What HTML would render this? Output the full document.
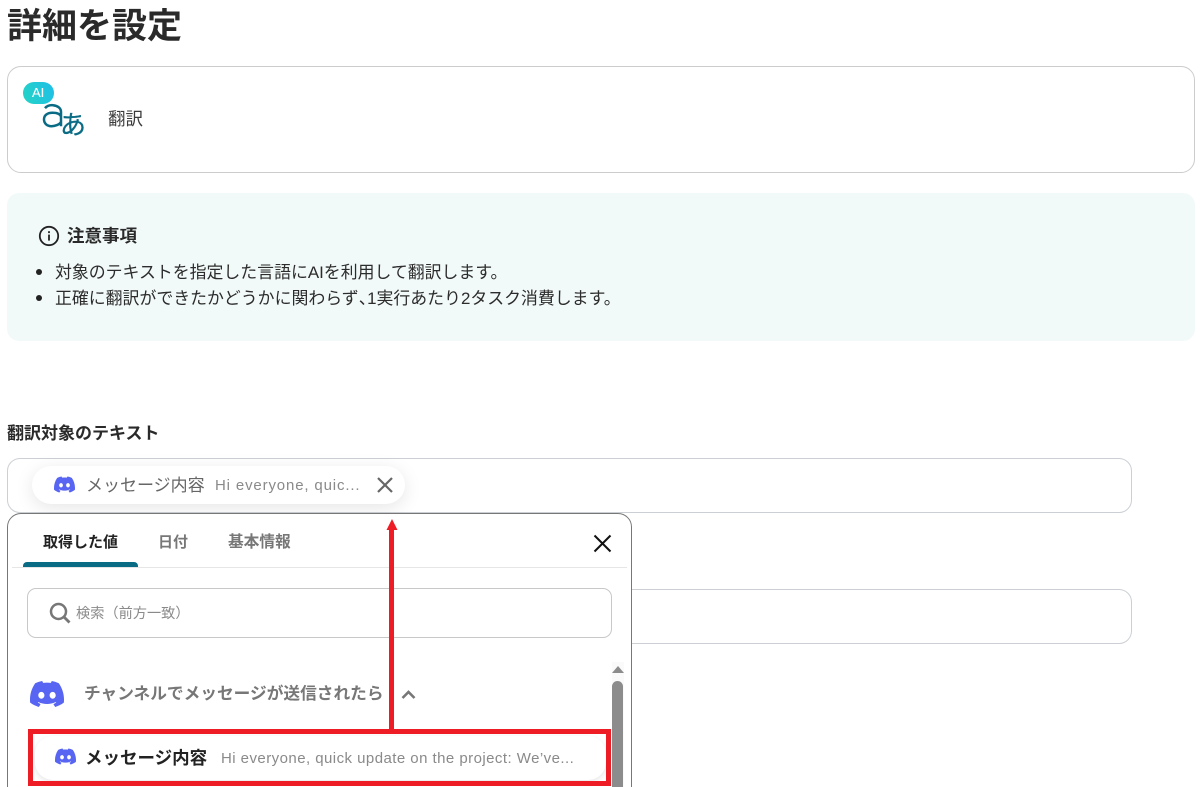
<!DOCTYPE html>
<html lang="ja"><head><meta charset="utf-8"><title>詳細を設定</title>
<style>
html,body{margin:0;padding:0;background:#fff;width:1200px;height:787px;overflow:hidden}
body{position:relative;font-family:"Liberation Sans","Noto Sans CJK JP",sans-serif;color:#222}
.a{position:absolute;box-sizing:border-box}
.t{position:absolute;white-space:nowrap;line-height:1}
svg{position:absolute;display:block}
</style></head><body>
<svg width="0" height="0" style="position:absolute"><defs><symbol id="d" viewBox="0 0 24 24"><path fill="#5865f2" d="M20.317 4.3698a19.7913 19.7913 0 00-4.8851-1.5152.0741.0741 0 00-.0785.0371c-.211.3753-.4447.8648-.6083 1.2495-1.8447-.2762-3.68-.2762-5.4868 0-.1636-.3933-.4058-.8742-.6177-1.2495a.077.077 0 00-.0785-.037 19.7363 19.7363 0 00-4.8852 1.515.0699.0699 0 00-.0321.0277C.5334 9.0458-.319 13.5799.0992 18.0578a.0824.0824 0 00.0312.0561c2.0528 1.5076 4.0413 2.4228 5.9929 3.0294a.0777.0777 0 00.0842-.0276c.4616-.6304.8731-1.2952 1.226-1.9942a.076.076 0 00-.0416-.1057c-.6528-.2476-1.2743-.5495-1.8722-.8923a.077.077 0 01-.0076-.1277c.1258-.0943.2517-.1923.3718-.2914a.0743.0743 0 01.0776-.0105c3.9278 1.7933 8.18 1.7933 12.0614 0a.0739.0739 0 01.0785.0095c.1202.099.246.1981.3728.2924a.077.077 0 01-.0066.1276 12.2986 12.2986 0 01-1.873.8914.0766.0766 0 00-.0407.1067c.3604.698.7719 1.3628 1.225 1.9932a.076.076 0 00.0842.0286c1.961-.6067 3.9495-1.5219 6.0023-3.0294a.077.077 0 00.0313-.0552c.5004-5.177-.8382-9.6739-3.5485-13.6604a.061.061 0 00-.0312-.0286zM8.02 15.3312c-1.1825 0-2.1569-1.0857-2.1569-2.419 0-1.3332.9555-2.4189 2.157-2.4189 1.2108 0 2.1757 1.0952 2.1568 2.419 0 1.3332-.9555 2.4189-2.1569 2.4189zm7.9748 0c-1.1825 0-2.1569-1.0857-2.1569-2.419 0-1.3332.9554-2.4189 2.1569-2.4189 1.2108 0 2.1757 1.0952 2.1568 2.419 0 1.3332-.946 2.4189-2.1568 2.4189Z"/></symbol></defs></svg>

<div class="t" style="left:7px;top:9px;font-size:35px;font-weight:700;color:#2a2a2a">詳細を設定</div>

<div class="a" style="left:7px;top:66px;width:1188px;height:107px;border:1px solid #ccc;border-radius:14px"></div>
<svg style="left:40px;top:100px" width="26" height="30" viewBox="0 0 26 30"><path d="M5 8.2C7 5.8 10 5 13 5.2 17.4 5.6 21 8 21 12V26.2M21 16.5C20 13.8 16.6 12.8 12.5 12.8 7 12.8 4 15.5 4 19.4 4 23.4 7 26.2 11.5 26.2 15 26.2 19.5 24.6 21 22" fill="none" stroke="#0a6b85" stroke-width="2.5"/></svg>
<div class="t" style="left:60px;top:112px;font-size:26px;color:#0a6b85;-webkit-text-stroke:.3px #0a6b85">あ</div>
<div class="a" style="left:23px;top:82px;width:31px;height:22px;border-radius:11px;background:linear-gradient(70deg,#24d3c4,#1fbfe8)"></div>
<div class="t" style="left:32px;top:86px;font-size:13px;color:#fff;-webkit-text-stroke:.1px #fff">AI</div>
<div class="t" style="left:108px;top:111px;font-size:17.5px;color:#3c3c3c">翻訳</div>

<div class="a" style="left:7px;top:193px;width:1188px;height:148px;background:#f2faf9;border-radius:12px"></div>
<svg style="left:38px;top:225px" width="22" height="22" viewBox="0 0 22 22"><circle cx="11" cy="11" r="9.2" fill="none" stroke="#222" stroke-width="1.8"/><rect x="10.1" y="9.6" width="1.8" height="6" fill="#222"/><rect x="10.1" y="6.2" width="1.8" height="1.9" fill="#222"/></svg>
<div class="t" style="left:67px;top:228px;font-size:17.5px;font-weight:700;color:#2a2a2a">注意事項</div>
<div class="a" style="left:36px;top:269px;width:6px;height:6px;border-radius:50%;background:#222"></div>
<div class="t" style="left:55px;top:265px;font-size:16.9px;color:#2c2c2c">対象のテキストを指定した言語にAIを利用して翻訳します。</div>
<div class="a" style="left:36px;top:295px;width:6px;height:6px;border-radius:50%;background:#222"></div>
<div class="t" style="left:55px;top:291px;font-size:16.9px;color:#2c2c2c">正確に翻訳ができたかどうかに関わらず<span style="letter-spacing:-8.5px">、</span>1実行あたり2タスク消費します。</div>

<div class="t" style="left:7px;top:425px;font-size:17px;font-weight:700;color:#2a2a2a">翻訳対象のテキスト</div>
<div class="a" style="left:7px;top:458px;width:1125px;height:55px;border:1px solid #ccd0d4;border-radius:13px"></div>
<div class="a" style="left:7px;top:589px;width:1125px;height:55px;border:1px solid #ccd0d4;border-radius:13px"></div>

<div class="a" style="left:32px;top:466px;width:373px;height:38px;border-radius:19px;background:#fff;box-shadow:0 4px 18px rgba(0,0,0,.1)"></div>
<svg style="left:54px;top:474px" width="21" height="21"><use href="#d"/></svg>
<div class="t" style="left:86px;top:477px;font-size:17px;color:#666">メッセージ内容</div>
<div class="t" style="left:215px;top:478px;font-size:15px;letter-spacing:.85px;color:#8a8a8a">Hi everyone, quic...</div>
<svg style="left:376px;top:476px" width="18" height="18" viewBox="0 0 18 18"><path d="M2 2L16 16M16 2L2 16" stroke="#666" stroke-width="2.2" fill="none"/></svg>

<div class="a" style="left:7px;top:513px;width:625px;height:300px;background:#fff;border:1px solid #777;border-radius:14px"></div>
<div class="t" style="left:43px;top:535px;font-size:15px;font-weight:700;color:#222">取得した値</div>
<div class="t" style="left:158px;top:535px;font-size:15px;font-weight:700;color:#777">日付</div>
<div class="t" style="left:228px;top:535px;font-size:15.7px;font-weight:700;color:#777">基本情報</div>
<div class="a" style="left:12px;top:567px;width:615px;height:1px;background:#e6e6e6"></div>
<div class="a" style="left:23px;top:562px;width:115px;height:5px;background:#0a6b85;border-radius:4px 4px 0 0"></div>
<svg style="left:593px;top:534px" width="19" height="19" viewBox="0 0 19 19"><path d="M1.5 1.5L17.5 17.5M17.5 1.5L1.5 17.5" stroke="#111" stroke-width="2" fill="none"/></svg>

<div class="a" style="left:27px;top:588px;width:585px;height:50px;border:1px solid #c8c8c8;border-radius:9px"></div>
<svg style="left:49px;top:602px" width="22" height="22" viewBox="0 0 22 22"><circle cx="9.5" cy="9.5" r="7.5" fill="none" stroke="#777" stroke-width="2.5"/><path d="M15 15L20.5 20.5" stroke="#777" stroke-width="2.8" fill="none"/></svg>
<div class="t" style="left:76px;top:607px;font-size:14.2px;color:#8a8a8a">検索（前方一致）</div>

<svg style="left:30px;top:677px" width="34" height="34"><use href="#d"/></svg>
<div class="t" style="left:84px;top:686px;font-size:16.7px;font-weight:700;color:#777">チャンネルでメッセージが送信されたら</div>
<svg style="left:401px;top:689px" width="15" height="11" viewBox="0 0 15 11"><path d="M1.5 9L7.5 3L13.5 9" fill="none" stroke="#777" stroke-width="2.6"/></svg>

<div class="a" style="left:612px;top:662px;width:12px;height:125px;background:#fafafa"></div>
<svg style="left:611px;top:665px" width="14" height="9" viewBox="0 0 14 9"><path d="M7 1L13 8H1Z" fill="#8c8c8c"/></svg>
<div class="a" style="left:612px;top:681px;width:11px;height:120px;background:#8c8c8c;border-radius:6px"></div>

<div class="a" style="left:35px;top:736px;width:571px;height:44px;border-radius:18px;background:#fff;box-shadow:0 2px 6px rgba(0,0,0,.1)"></div>
<svg style="left:55px;top:746px" width="21" height="21"><use href="#d"/></svg>
<div class="t" style="left:85px;top:750px;font-size:17.5px;font-weight:700;color:#222">メッセージ内容</div>
<div class="t" style="left:221px;top:751px;font-size:15px;letter-spacing:.45px;color:#8a8a8a">Hi everyone, quick update on the project: We’ve...</div>

<div class="a" style="left:28px;top:729px;width:583px;height:57px;border:5px solid #ee1c25"></div>
<div class="a" style="left:389px;top:530px;width:5px;height:200px;background:#ee1c25"></div>
<svg style="left:386px;top:519px" width="12" height="12" viewBox="0 0 12 12"><path d="M6 0L11.5 11H.5Z" fill="#ee1c25"/></svg>
</body></html>
